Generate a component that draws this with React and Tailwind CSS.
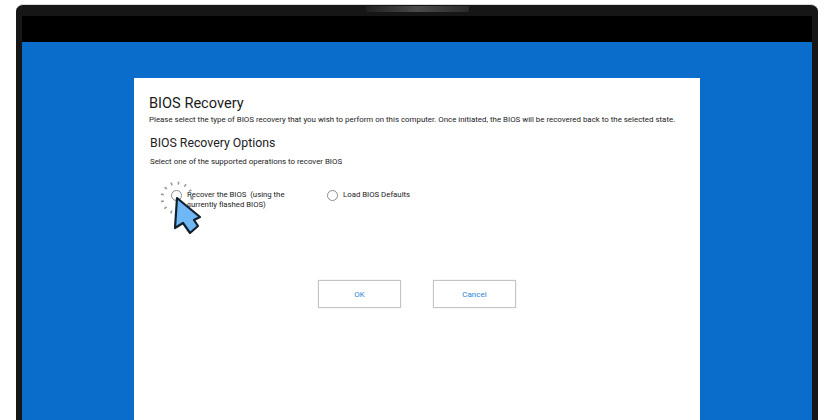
import React from 'react';

function Radio({ active = false }) {
    return (
        <span className={`mt-[1px] h-[11px] w-[11px] shrink-0 rounded-full border border-[#8c8c8c] bg-white ${active ? 'relative' : ''}`}>
            {active && (
                <svg className="absolute left-[-12px] top-[-10px]" width="34" height="34" viewBox="0 0 34 34">
                    <circle cx="17" cy="17" r="15" fill="none" stroke="#9a9a9a" strokeWidth="3" strokeDasharray="1.6 5.5" />
                </svg>
            )}
        </span>
    );
}

function CursorIcon() {
    return (
        <svg className="absolute left-[173px] top-[195px]" width="30" height="42" viewBox="0 0 30 42">
            <path
                d="M4 3 L27 22 L21 25 L25 31 L17 38 L10 28 L2 33 Z"
                fill="#6fb8f5"
                stroke="#12202c"
                strokeWidth="2.2"
                strokeLinejoin="round"
            />
        </svg>
    );
}

export default function App() {
    return (
        <div className="relative h-[420px] w-[838px] overflow-hidden bg-white pl-[16px] pr-[20px] pt-[4px] font-['Roboto',sans-serif]">
            <div className="h-[430px] rounded-t-[7px] border-t border-[#d9d9d9] bg-[#161616] px-[6px] pt-[1px]">
                <div className="flex h-[10px] justify-center">
                    <div className="h-[6px] w-[103px] rounded-b-[2px] bg-gradient-to-r from-[#202020] via-[#4a4a4a] to-[#2a2a2a]" />
                </div>
                <div className="h-[26px] bg-black" />
                <div className="flex h-[400px] justify-center bg-[#0a6ccb] pt-[36px]">
                    <div className="h-[360px] w-[566px] bg-white pl-[15px] pr-[10px] pt-[15px] text-[#222]">
                        <h1 className="text-[14.6px] leading-[20px] text-[#1b1b1b]">BIOS Recovery</h1>
                        <p className="mt-[1px] whitespace-nowrap text-[7.9px] leading-[11px]">
                            Please select the type of BIOS recovery that you wish to perform on this computer. Once initiated, the BIOS will be recovered back to the selected state.
                        </p>
                        <h2 className="ml-[1px] mt-[10px] text-[12.3px] leading-[16px]">BIOS Recovery Options</h2>
                        <p className="ml-[1px] mt-[6px] text-[7.9px] leading-[10px]">Select one of the supported operations to recover BIOS</p>
                        <div className="ml-[22px] mt-[22px] flex">
                            <div className="flex w-[156px] gap-[5px]">
                                <Radio active />
                                <span className="mt-[1px] w-[120px] text-[7.75px] leading-[10px]">Recover the BIOS&nbsp; (using the currently flashed BIOS)</span>
                            </div>
                            <div className="flex gap-[5px]">
                                <Radio />
                                <span className="mt-[1px] text-[7.8px] leading-[10px]">Load BIOS Defaults</span>
                            </div>
                        </div>
                        <div className="ml-[169px] mt-[70px] flex gap-[32px]">
                            <button className="h-[28px] w-[83px] border border-[#c4c4c4] pt-[1px] text-[8px] text-[#2b86d6] shadow-[0_0_1px_#ccc]">OK</button>
                            <button className="h-[28px] w-[83px] border border-[#c4c4c4] pt-[1px] text-[8px] text-[#2b86d6] shadow-[0_0_1px_#ccc]">Cancel</button>
                        </div>
                    </div>
                </div>
            </div>
            <CursorIcon />
        </div>
    );
}
